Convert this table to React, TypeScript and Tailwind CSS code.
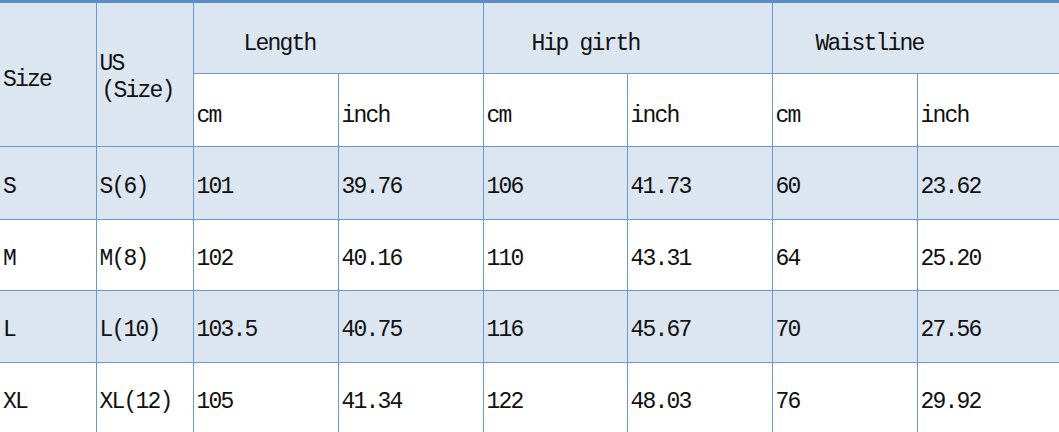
const rows = [
  { size: 'S', us: 'S(6)', l: ['101', '39.76'], h: ['106', '41.73'], w: ['60', '23.62'], shade: true, height: 'h-[73px]' },
  { size: 'M', us: 'M(8)', l: ['102', '40.16'], h: ['110', '43.31'], w: ['64', '25.20'], shade: false, height: 'h-[71px]' },
  { size: 'L', us: 'L(10)', l: ['103.5', '40.75'], h: ['116', '45.67'], w: ['70', '27.56'], shade: true, height: 'h-[72px]' },
  { size: 'XL', us: 'XL(12)', l: ['105', '41.34'], h: ['122', '48.03'], w: ['76', '29.92'], shade: false, height: 'h-[72px]' },
];

const cell = 'border border-[#6a99d2] pl-[3px] align-middle';

export default function App() {
  return (
    <div className="w-[1059px] h-[432px] overflow-hidden bg-white">
      <table
        className="table-fixed border-collapse w-[1064px] border-t-[3px] border-t-[#5b8dcc] text-[23px] leading-none tracking-[-1.8px] text-[#111]"
        style={{ fontFamily: '"Liberation Mono", "DejaVu Sans Mono", monospace' }}
      >
        <colgroup>
          <col className="w-[96px]" />
          <col className="w-[97px]" />
          <col className="w-[145px]" />
          <col className="w-[145px]" />
          <col className="w-[144px]" />
          <col className="w-[145px]" />
          <col className="w-[145px]" />
          <col className="w-[147px]" />
        </colgroup>
        <thead>
          <tr className="h-[72px] bg-[#dce6f1]">
            <th rowSpan={2} className={`${cell} border-l-0 text-left font-normal pt-3`}>Size</th>
            <th rowSpan={2} className={`${cell} text-left font-normal pt-[6px]`}>
              <div className="leading-[27px]">US</div>
              <div className="leading-[27px] pl-[2px]">(Size)</div>
            </th>
            <th colSpan={2} className={`${cell} text-left font-normal pl-[50px] pt-3`}>Length</th>
            <th colSpan={2} className={`${cell} text-left font-normal pl-[48px] pt-3`}>Hip girth</th>
            <th colSpan={2} className={`${cell} text-left font-normal pl-[43px] pt-3`}>Waistline</th>
          </tr>
          <tr className="h-[73px] bg-white">
            {['cm', 'inch', 'cm', 'inch', 'cm', 'inch'].map((u, i) => (
              <th key={i} className={`${cell} text-left font-normal pt-3`}>{u}</th>
            ))}
          </tr>
        </thead>
        <tbody>
          {rows.map((r) => (
            <tr key={r.size} className={`${r.height} ${r.shade ? 'bg-[#dce6f1]' : 'bg-white'}`}>
              <td className={`${cell} border-l-0 pt-2`}>{r.size}</td>
              <td className={`${cell} pt-2`}>{r.us}</td>
              {[...r.l, ...r.h, ...r.w].map((v, i) => (
                <td key={i} className={`${cell} pt-2`}>{v}</td>
              ))}
            </tr>
          ))}
        </tbody>
      </table>
    </div>
  );
}
